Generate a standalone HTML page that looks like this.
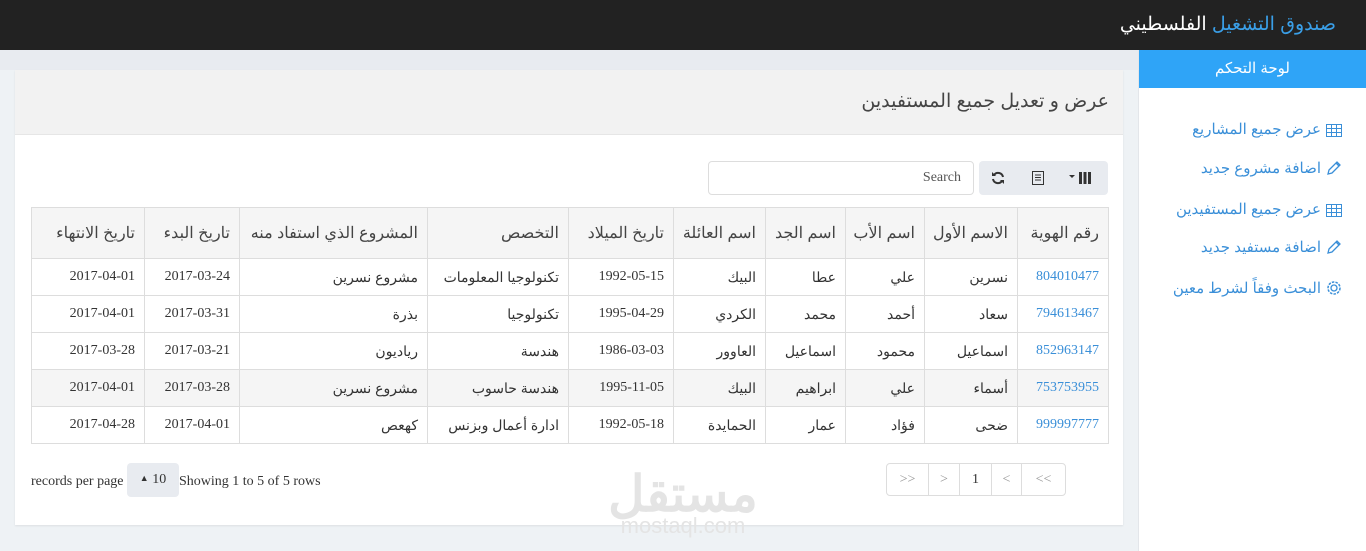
<!DOCTYPE html>
<html><head><meta charset="utf-8"><style>
*{box-sizing:border-box;margin:0;padding:0}
body{width:1366px;height:551px;overflow:hidden;background:#eef2f5;font-family:"Liberation Sans","Noto Sans CJK SC",sans-serif;position:relative}
.nav{position:absolute;left:0;top:0;width:1366px;height:50px;background:#222}
.brand{position:absolute;right:30px;top:13px;font-size:19px;color:#fff;direction:rtl;white-space:nowrap}
.brand span{color:#3a9fe8}
.strip{position:absolute;left:0;top:50px;width:1138px;height:20px;background:#e8ebf0}
.side{position:absolute;left:1138px;top:50px;width:228px;height:501px;background:#fff;border-left:1px solid #e3e6ea}
.sidehead{height:38px;background:#2fa4f7;color:#fff;text-align:center;font-size:15px;line-height:38px}
.si{position:absolute;right:24px;color:#3a8fd8;font-size:15px;direction:rtl;white-space:nowrap}
.si svg{vertical-align:-3px;margin-left:5px}
.panel{position:absolute;left:15px;top:70px;width:1108px;height:455px;background:#fff;box-shadow:0 1px 2px rgba(0,0,0,.08)}
.ph{height:65px;background:#f2f2f2;border-bottom:1px solid #e6e6e6;direction:rtl;padding-right:14px;font-size:19px;line-height:64px;color:#444}
.search{position:absolute;left:693px;top:91px;width:266px;height:34px;border:1px solid #ddd;border-radius:4px;font-family:"Liberation Serif",serif;font-size:14px;color:#555;text-align:right;padding-right:12px;line-height:32px}
.btns{position:absolute;left:964px;top:91px;width:129px;height:34px;background:#e8ebf0;border-radius:4px}
table{position:absolute;left:16px;top:137px;width:1077px;table-layout:fixed;border-collapse:collapse;direction:rtl;border:1px solid #ddd}
th,td{border:1px solid #ddd;text-align:right;padding:0 9px;white-space:nowrap;overflow:hidden}
th{height:51px;background:#f5f5f5;font-weight:normal;font-size:16px;color:#444}
td{height:37px;font-size:14px;color:#333}
td.n{font-family:"Liberation Serif",serif}
td.id{color:#3a8fd8}
tr.h td{background:#f5f5f5}
.ft{position:absolute;font-family:"Liberation Serif",serif;font-size:14px;color:#333}
.pg{position:absolute;left:871px;top:393px;height:33px;border:1px solid #ddd;border-radius:4px;display:flex;direction:ltr;font-family:"Liberation Serif",serif;font-size:14px;color:#999}
.pg div{border-left:1px solid #ddd;text-align:center;line-height:31px}
.pg div:first-child{border-left:none}
.wm{position:absolute;color:#e4e4e4;font-weight:bold;text-align:center;white-space:nowrap}
</style></head><body>
<div class="nav"><div class="brand"><span>صندوق التشغيل</span> الفلسطيني</div></div>
<div class="strip"></div>
<div class="side">
<div class="sidehead">لوحة التحكم</div>
<div class="si" style="top:70px"><svg width="16" height="13"><rect x="0.5" y="0.5" width="15" height="12" fill="#fff" stroke="#3a8fd8"/><path d="M0 4.5H16M0 8.5H16M5.5 0V13M10.5 0V13" stroke="#3a8fd8"/></svg>عرض جميع المشاريع</div>
<div class="si" style="top:109px"><svg width="16" height="16"><path d="M2 14l1-4L11 2l3 3-8 8z M10 3l3 3" fill="none" stroke="#3a8fd8" stroke-width="1.3"/></svg>اضافة مشروع جديد</div>
<div class="si" style="top:150px"><svg width="16" height="13"><rect x="0.5" y="0.5" width="15" height="12" fill="#fff" stroke="#3a8fd8"/><path d="M0 4.5H16M0 8.5H16M5.5 0V13M10.5 0V13" stroke="#3a8fd8"/></svg>عرض جميع المستفيدين</div>
<div class="si" style="top:188px"><svg width="16" height="16"><path d="M2 14l1-4L11 2l3 3-8 8z M10 3l3 3" fill="none" stroke="#3a8fd8" stroke-width="1.3"/></svg>اضافة مستفيد جديد</div>
<div class="si" style="top:229px"><svg width="16" height="16"><circle cx="8" cy="8" r="6" fill="none" stroke="#3a8fd8" stroke-width="1.5" stroke-dasharray="2.5 1.2"/><circle cx="8" cy="8" r="3" fill="none" stroke="#3a8fd8" stroke-width="1.3"/></svg>البحث وفقاً لشرط معين</div>
</div>
<div class="panel">
<div class="ph">عرض و تعديل جميع المستفيدين</div>
<div class="search">Search</div>
<div class="btns">
<svg style="position:absolute;left:12px;top:10px" width="14" height="14"><path d="M12 6A5 5 0 0 0 3 4M2 8a5 5 0 0 0 9 2" fill="none" stroke="#333" stroke-width="2"/><path d="M1 1v4h4zM13 13V9H9z" fill="#333"/></svg>
<svg style="position:absolute;left:53px;top:10px" width="12" height="14"><rect x="0.5" y="0.5" width="11" height="13" fill="none" stroke="#333"/><path d="M3 4h6M3 6.5h6M3 9h6" stroke="#333"/></svg>
<svg style="position:absolute;left:90px;top:10px" width="26" height="14"><path d="M0 4h6l-3 3z" fill="#333"/><rect x="10" y="1" width="3" height="12" fill="#333"/><rect x="14.5" y="1" width="3" height="12" fill="#333"/><rect x="19" y="1" width="3" height="12" fill="#333"/></svg>
</div>
<table>
<colgroup><col style="width:91px"><col style="width:93px"><col style="width:79px"><col style="width:80px"><col style="width:92px"><col style="width:105px"><col style="width:141px"><col style="width:188px"><col style="width:95px"><col style="width:113px"></colgroup>
<tr><th>رقم الهوية</th><th>الاسم الأول</th><th>اسم الأب</th><th>اسم الجد</th><th>اسم العائلة</th><th>تاريخ الميلاد</th><th>التخصص</th><th>المشروع الذي استفاد منه</th><th>تاريخ البدء</th><th>تاريخ الانتهاء</th></tr>
<tr><td class="n id">804010477</td><td>نسرين</td><td>علي</td><td>عطا</td><td>البيك</td><td class="n">1992-05-15</td><td>تكنولوجيا المعلومات</td><td>مشروع نسرين</td><td class="n">2017-03-24</td><td class="n">2017-04-01</td></tr>
<tr><td class="n id">794613467</td><td>سعاد</td><td>أحمد</td><td>محمد</td><td>الكردي</td><td class="n">1995-04-29</td><td>تكنولوجيا</td><td>بذرة</td><td class="n">2017-03-31</td><td class="n">2017-04-01</td></tr>
<tr><td class="n id">852963147</td><td>اسماعيل</td><td>محمود</td><td>اسماعيل</td><td>العاوور</td><td class="n">1986-03-03</td><td>هندسة</td><td>رياديون</td><td class="n">2017-03-21</td><td class="n">2017-03-28</td></tr>
<tr class="h"><td class="n id">753753955</td><td>أسماء</td><td>علي</td><td>ابراهيم</td><td>البيك</td><td class="n">1995-11-05</td><td>هندسة حاسوب</td><td>مشروع نسرين</td><td class="n">2017-03-28</td><td class="n">2017-04-01</td></tr>
<tr><td class="n id">999997777</td><td>ضحى</td><td>فؤاد</td><td>عمار</td><td>الحمايدة</td><td class="n">1992-05-18</td><td>ادارة أعمال وبزنس</td><td>كهعص</td><td class="n">2017-04-01</td><td class="n">2017-04-28</td></tr>
</table>
<div class="ft" style="left:16px;top:404px">records per page</div>
<div style="position:absolute;left:112px;top:393px;width:52px;height:34px;background:#e8ebf0;border-radius:4px;font-family:'Liberation Serif',serif;font-size:14px;color:#333;line-height:30px;text-align:center"><span style="font-size:9px;vertical-align:2px">▲</span> 10</div>
<div class="ft" style="left:164px;top:404px">Showing 1 to 5 of 5 rows</div>
<div class="pg"><div style="width:41px">&gt;&gt;</div><div style="width:31px">&gt;</div><div style="width:32px;color:#333">1</div><div style="width:30px">&lt;</div><div style="width:44px">&lt;&lt;</div></div>
</div>
<div class="wm" style="font-size:50px;left:608px;top:460px;width:150px;font-family:'Noto Sans CJK SC',sans-serif;line-height:60px">مستقل</div>
<div class="wm" style="font-size:22px;left:608px;top:513px;width:150px;font-weight:normal">mostaql.com</div>
</body></html>
